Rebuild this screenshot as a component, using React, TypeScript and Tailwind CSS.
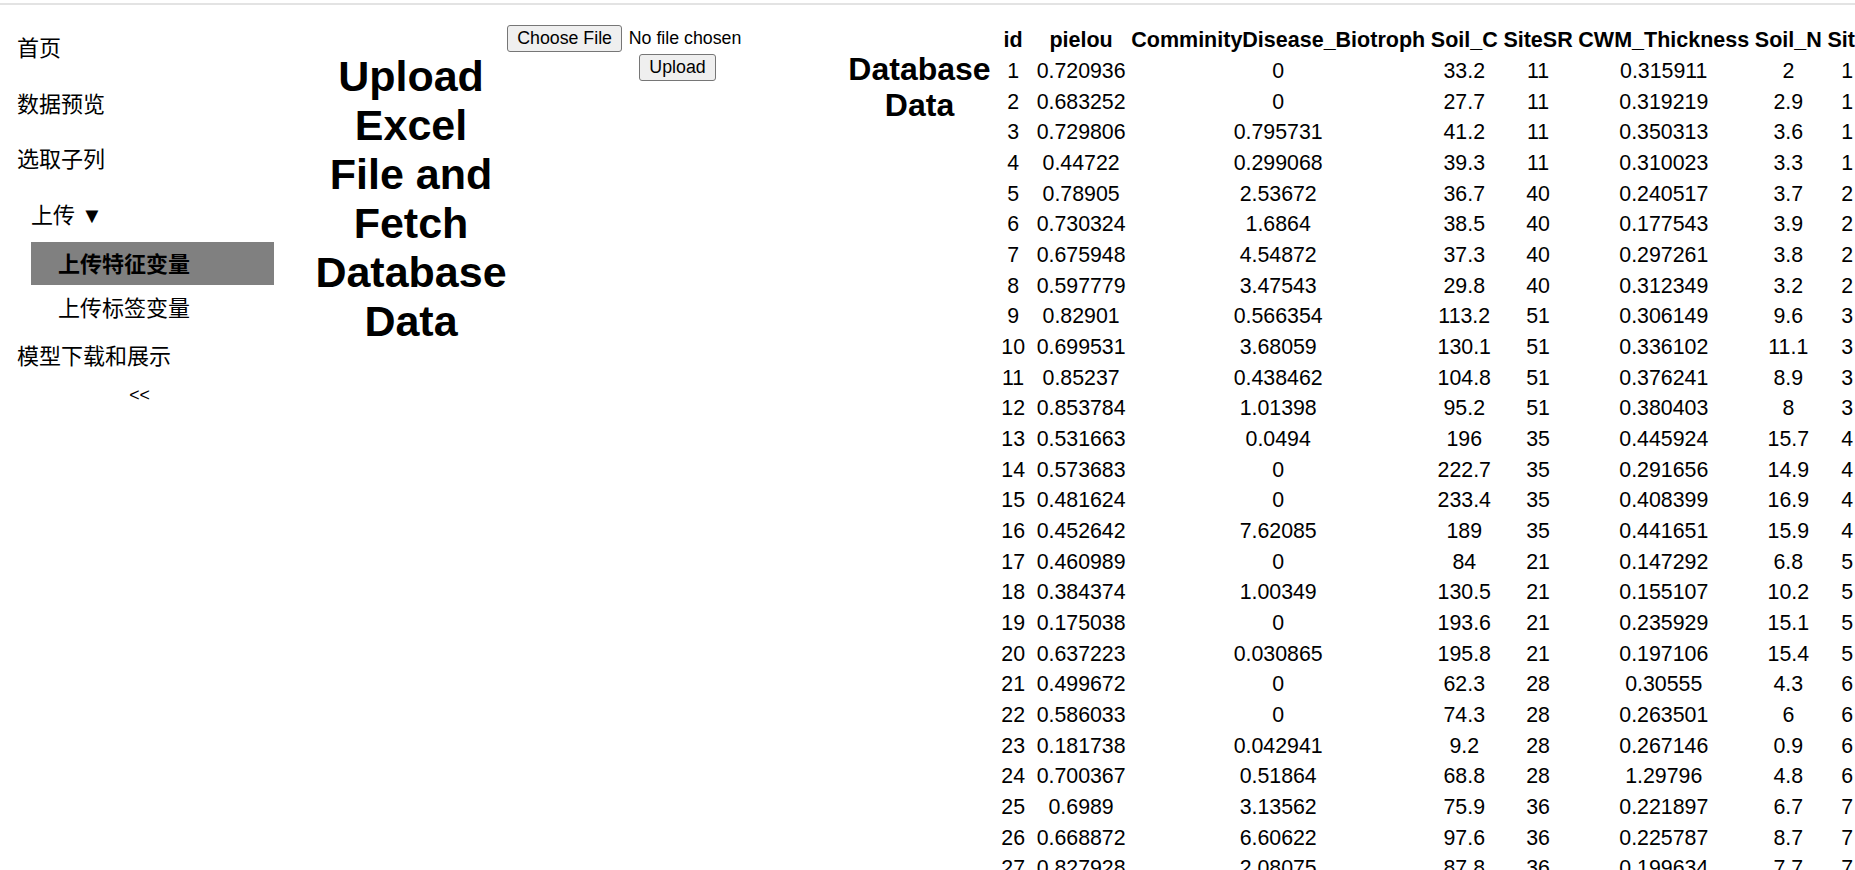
const columns = [
  "id",
  "pielou",
  "ComminityDisease_Biotroph",
  "Soil_C",
  "SiteSR",
  "CWM_Thickness",
  "Soil_N",
  "Site",
];

const rows: (string | number)[][] = [
  [1, "0.720936", "0", "33.2", 11, "0.315911", "2", 1],
  [2, "0.683252", "0", "27.7", 11, "0.319219", "2.9", 1],
  [3, "0.729806", "0.795731", "41.2", 11, "0.350313", "3.6", 1],
  [4, "0.44722", "0.299068", "39.3", 11, "0.310023", "3.3", 1],
  [5, "0.78905", "2.53672", "36.7", 40, "0.240517", "3.7", 2],
  [6, "0.730324", "1.6864", "38.5", 40, "0.177543", "3.9", 2],
  [7, "0.675948", "4.54872", "37.3", 40, "0.297261", "3.8", 2],
  [8, "0.597779", "3.47543", "29.8", 40, "0.312349", "3.2", 2],
  [9, "0.82901", "0.566354", "113.2", 51, "0.306149", "9.6", 3],
  [10, "0.699531", "3.68059", "130.1", 51, "0.336102", "11.1", 3],
  [11, "0.85237", "0.438462", "104.8", 51, "0.376241", "8.9", 3],
  [12, "0.853784", "1.01398", "95.2", 51, "0.380403", "8", 3],
  [13, "0.531663", "0.0494", "196", 35, "0.445924", "15.7", 4],
  [14, "0.573683", "0", "222.7", 35, "0.291656", "14.9", 4],
  [15, "0.481624", "0", "233.4", 35, "0.408399", "16.9", 4],
  [16, "0.452642", "7.62085", "189", 35, "0.441651", "15.9", 4],
  [17, "0.460989", "0", "84", 21, "0.147292", "6.8", 5],
  [18, "0.384374", "1.00349", "130.5", 21, "0.155107", "10.2", 5],
  [19, "0.175038", "0", "193.6", 21, "0.235929", "15.1", 5],
  [20, "0.637223", "0.030865", "195.8", 21, "0.197106", "15.4", 5],
  [21, "0.499672", "0", "62.3", 28, "0.30555", "4.3", 6],
  [22, "0.586033", "0", "74.3", 28, "0.263501", "6", 6],
  [23, "0.181738", "0.042941", "9.2", 28, "0.267146", "0.9", 6],
  [24, "0.700367", "0.51864", "68.8", 28, "1.29796", "4.8", 6],
  [25, "0.6989", "3.13562", "75.9", 36, "0.221897", "6.7", 7],
  [26, "0.668872", "6.60622", "97.6", 36, "0.225787", "8.7", 7],
  [27, "0.827928", "2.08075", "87.8", 36, "0.199634", "7.7", 7],
];

const Sidebar = () => {
  return (
    <aside className="w-[279px] shrink-0 pt-[15px] text-[22px] font-['Liberation_Sans','Noto_Sans_CJK_SC',sans-serif]">
      <div className="flex h-[55.6px] items-center pl-[17px] pt-[2px]">首页</div>
      <div className="flex h-[55.6px] items-center pl-[17px] pt-[2px]">数据预览</div>
      <div className="flex h-[55.6px] items-center pl-[17px] pt-[2px]">选取子列</div>
      <div className="flex h-[55.6px] items-center pl-[31px] pt-[2px]">上传 ▼</div>

      {/* 子菜单 */}
      <div className="ml-[31px] w-[243px]">
        <div className="flex h-[42.5px] items-center bg-[#808080] pl-[27px] pt-[1.5px] font-bold">
          上传特征变量
        </div>
        <div className="flex h-[43px] items-center pl-[27px] pt-[4px]">上传标签变量</div>
      </div>

      <div className="flex h-[55.6px] items-center pl-[17px] pt-[2.5px]">模型下载和展示</div>
      <div className="flex justify-center">
        <button
          type="button"
          className="px-[8px] py-[1.3px] text-[17.78px] leading-[20.4px] font-['Liberation_Sans',sans-serif]"
        >
          &lt;&lt;
        </button>
      </div>
    </aside>
  );
};

const UploadForm = () => {
  return (
    <div className="flex w-[341px] shrink-0 flex-col gap-[1.6px] pt-[1.3px] text-[17.78px] leading-[20.4px]">
      <div className="flex items-center gap-[6.6px] self-start">
        <button
          type="button"
          className="rounded-[3px] border border-[#767676] bg-[#efefef] px-[9.2px] py-[2.2px]"
        >
          Choose File
        </button>
        <span>No file chosen</span>
      </div>
      <button
        type="button"
        className="self-center rounded-[3px] border border-[#767676] bg-[#efefef] px-[9px] py-[2.5px]"
      >
        Upload
      </button>
    </div>
  );
};

const DataTable = () => {
  return (
    <table className="-mt-[0.7px] shrink-0 border-separate border-spacing-[3px] text-[21.33px]">
      <thead>
        <tr>
          {columns.map((col) => (
            <th
              key={col}
              className={`h-[28.5px] p-[1.33px] text-center text-[21.5px] leading-[25px] font-bold whitespace-nowrap ${
                col === "id" ? "w-[38.3px]" : ""
              }`}
            >
              {col}
            </th>
          ))}
        </tr>
      </thead>
      <tbody>
        {rows.map((row) => (
          <tr key={row[0]}>
            {row.map((cell, i) => (
              <td
                key={i}
                className="h-[27.66px] p-[1.33px] text-center leading-[25px] whitespace-nowrap"
              >
                {cell}
              </td>
            ))}
          </tr>
        ))}
      </tbody>
    </table>
  );
};

const App = () => {
  return (
    <div className="h-screen overflow-hidden bg-white text-black font-['Liberation_Sans','Noto_Sans_CJK_SC',sans-serif]">
      <div className="pt-[3px]">
        <div className="h-[2px] bg-[#e3e3e3]" />
      </div>

      <div className="flex items-start">
        <Sidebar />

        <main className="flex items-start pt-[19px] pl-[36px]">
          <h1 className="mt-[28.4px] w-[192px] shrink-0 text-center text-[43px] leading-[49px] font-bold">
            Upload Excel File and Fetch Database Data
          </h1>

          <UploadForm />

          <h2 className="mt-[26.5px] w-[143px] shrink-0 text-center text-[32px] leading-[36.7px] font-bold">
            Database Data
          </h2>

          <DataTable />
        </main>
      </div>
    </div>
  );
};

export default App;
